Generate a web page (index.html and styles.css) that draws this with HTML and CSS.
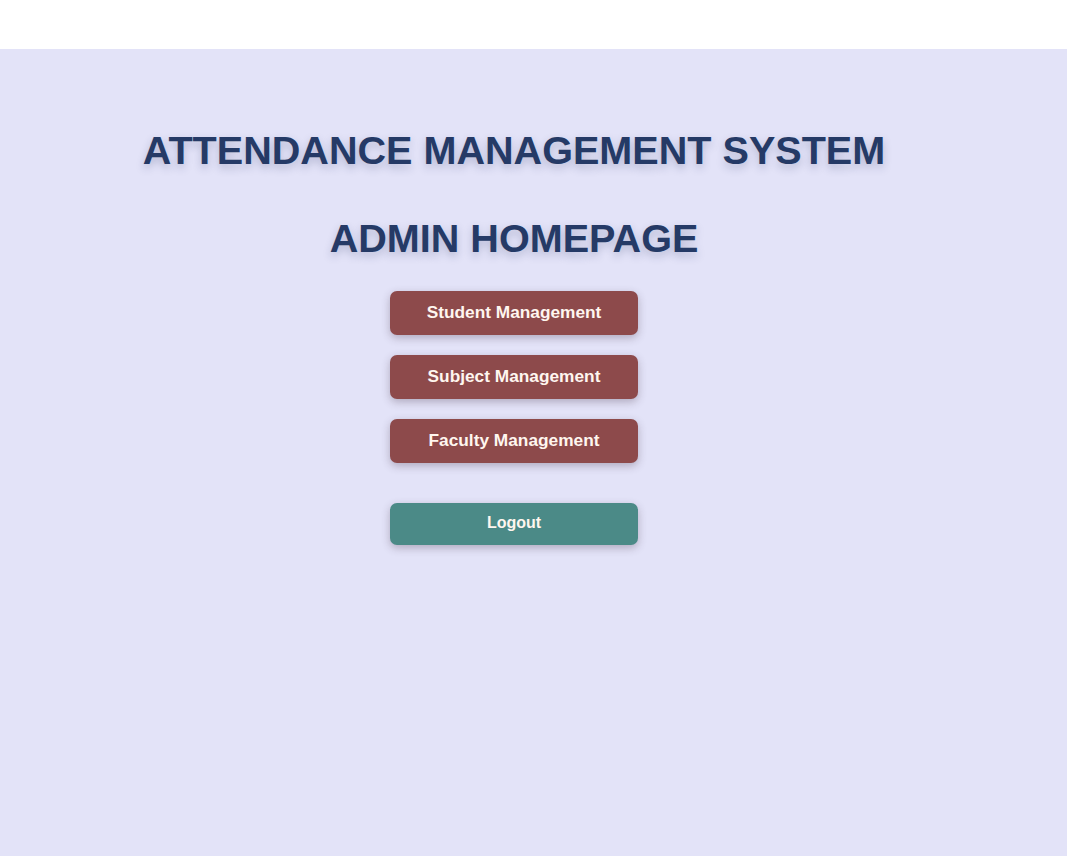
FILE: index.html
```html
<!DOCTYPE html>
<html>
<head>
<meta charset="utf-8">
<link rel="stylesheet" href="styles.css">
</head>
<body>
<div class="top"></div>
<main class="page">
  <div class="content">
    <h1 class="title">ATTENDANCE MANAGEMENT SYSTEM</h1>
    <h2 class="subtitle">ADMIN HOMEPAGE</h2>
    <div class="menu">
      <button class="btn btn-red">Student Management</button>
      <button class="btn btn-red">Subject Management</button>
      <button class="btn btn-red">Faculty Management</button>
      <button class="btn btn-teal logout">Logout</button>
    </div>
  </div>
</main>
</body>
</html>
```
FILE: styles.css
```css
html, body {
  margin: 0;
  padding: 0;
  background: #ffffff;
  font-family: "Liberation Sans", Arial, sans-serif;
}
.top {
  height: 49px;
  background: #ffffff;
}
.page {
  background: #e3e3f8;
  height: 807px;
}
.content {
  width: 1028px;
  display: flex;
  flex-direction: column;
  align-items: center;
}
.title {
  margin: 0;
  padding-top: 78px;
  font-size: 39.6px;
  font-weight: bold;
  color: #253a66;
  line-height: 46px;
  text-shadow: 0 4px 8px rgba(40, 50, 100, 0.25);
}
.subtitle {
  margin: 42px 0 0;
  font-size: 39.6px;
  font-weight: bold;
  color: #253a66;
  line-height: 46px;
  text-shadow: 0 4px 8px rgba(40, 50, 100, 0.25);
}
.menu {
  margin-top: 30px;
  display: flex;
  flex-direction: column;
  gap: 20px;
}
.btn {
  width: 248px;
  height: 44px;
  padding: 0 0 2px;
  border: none;
  border-radius: 7px;
  color: #fff6ef;
  font-family: "Liberation Sans", Arial, sans-serif;
  font-weight: bold;
  font-size: 17.3px;
  box-shadow: 0 3px 8px rgba(60, 40, 60, 0.3);
}
.btn-red {
  background: #8d4a4b;
}
.btn-teal {
  background: #4b8a87;
}
.logout {
  margin-top: 20px;
  height: 42px;
  font-size: 16px;
}
```
